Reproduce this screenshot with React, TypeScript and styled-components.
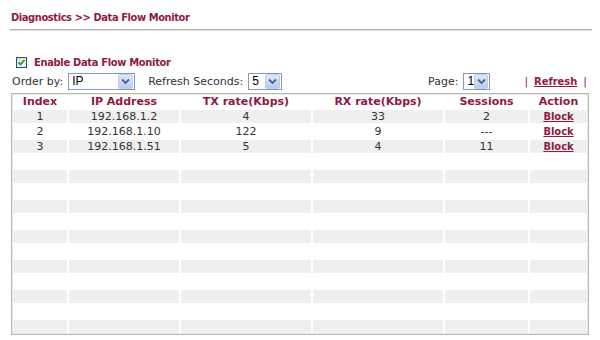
import React from "react";
import styled, { createGlobalStyle } from "styled-components";

const RED = "#8e1a45";
const NARROW = `"DejaVu Sans Condensed", "DejaVu Sans", Tahoma, sans-serif`;

const GlobalStyle = createGlobalStyle`
  html, body {
    margin: 0;
    padding: 0;
    background: #ffffff;
  }
  body {
    font-family: "DejaVu Sans", Verdana, sans-serif;
    font-size: 11px;
    color: #333333;
  }
`;

type Flow = {
  index: number;
  ip: string;
  tx: string;
  rx: string;
  sessions: string;
};

const flows: Flow[] = [
  { index: 1, ip: "192.168.1.2", tx: "4", rx: "33", sessions: "2" },
  { index: 2, ip: "192.168.1.10", tx: "122", rx: "9", sessions: "---" },
  { index: 3, ip: "192.168.1.51", tx: "5", rx: "4", sessions: "11" },
];

const headers = ["Index", "IP Address", "TX rate(Kbps)", "RX rate(Kbps)", "Sessions", "Action"];
const TOTAL_ROWS = 15;

const ArrowIcon = () => (
  <svg width="9" height="7" viewBox="0 0 9 7">
    <polyline points="1,1.5 4.5,5 8,1.5" fill="none" stroke="#4d6185" strokeWidth="1.8" />
  </svg>
);

const FakeSelect = ({ value, width }: { value: string; width: number }) => (
  <SelectBox $width={width}>
    <SelectValue>{value}</SelectValue>
    <SelectButton>
      <ArrowIcon />
    </SelectButton>
  </SelectBox>
);

const App = () => {
  const rows = Array.from({ length: TOTAL_ROWS }, (_, i) => flows[i]);
  return (
    <Page>
      <GlobalStyle />
      <Title>Diagnostics &gt;&gt; Data Flow Monitor</Title>
      <EnableRow>
        <CheckBox>
          <svg width="9" height="9" viewBox="0 0 9 9">
            <polyline points="1.5,4.5 3.5,6.5 7.5,2" fill="none" stroke="#21a121" strokeWidth="1.8" />
          </svg>
        </CheckBox>
        <EnableLabel>Enable Data Flow Monitor</EnableLabel>
      </EnableRow>
      <Controls>
        <Label>Order by:</Label>
        <FakeSelect value="IP" width={67} />
        <Label $gap={13}>Refresh Seconds:</Label>
        <FakeSelect value="5" width={34} />
        <Spacer />
        <Label>Page:</Label>
        <FakeSelect value="1" width={27} />
        <RefreshLinks>
          <Pipe>|</Pipe>
          <LinkText>Refresh</LinkText>
          <Pipe>|</Pipe>
        </RefreshLinks>
      </Controls>
      <TableFrame>
        <Grid>
          {headers.map((h) => (
            <HeadCell key={h}>{h}</HeadCell>
          ))}
          {rows.map((r, i) => {
            const shaded = i % 2 === 0;
            return (
              <React.Fragment key={i}>
                <Cell $shaded={shaded}>{r?.index}</Cell>
                <Cell $shaded={shaded}>{r?.ip}</Cell>
                <Cell $shaded={shaded}>{r?.tx}</Cell>
                <Cell $shaded={shaded}>{r?.rx}</Cell>
                <Cell $shaded={shaded}>{r?.sessions}</Cell>
                <Cell $shaded={shaded}>{r && <LinkText>Block</LinkText>}</Cell>
              </React.Fragment>
            );
          })}
        </Grid>
      </TableFrame>
    </Page>
  );
};
export default App;

const Page = styled.div`
  width: 600px;
  height: 340px;
  box-sizing: border-box;
  padding: 0 8px 0 10px;
  display: flex;
  flex-direction: column;
`;
const Title = styled.div`
  padding-top: 11px;
  padding-bottom: 5px;
  padding-left: 1px;
  line-height: 13px;
  font-family: ${NARROW};
  font-weight: 700;
  letter-spacing: -0.4px;
  color: ${RED};
  border-bottom: 1px solid #b4b4ac;
  box-shadow: 0 1px 0 #e2e2dc;
`;
const EnableRow = styled.div`
  margin-top: 26px;
  height: 13px;
  padding-left: 6px;
  display: flex;
  align-items: center;
  gap: 7px;
`;
const CheckBox = styled.span`
  width: 11px;
  height: 11px;
  box-sizing: border-box;
  border: 1px solid #1c5180;
  background: linear-gradient(135deg, #dcdcd6, #fbfbf9);
  display: flex;
  align-items: center;
  justify-content: center;
`;
const EnableLabel = styled.span`
  font-family: ${NARROW};
  font-weight: 700;
  letter-spacing: -0.3px;
  color: ${RED};
  line-height: 13px;
`;
const Controls = styled.div`
  margin-top: 3px;
  height: 19px;
  padding-left: 2px;
  padding-right: 5px;
  display: flex;
  align-items: center;
`;
const Label = styled.span<{ $gap?: number }>`
  margin-left: ${(p) => p.$gap ?? 0}px;
  margin-right: 5px;
  color: #333333;
`;
const Spacer = styled.div`
  flex: 1;
`;
const SelectBox = styled.div<{ $width: number }>`
  width: ${(p) => p.$width}px;
  height: 17px;
  box-sizing: border-box;
  border: 1px solid #7f9db9;
  background: #ffffff;
  display: flex;
  align-items: center;
`;
const SelectValue = styled.span`
  flex: 1;
  padding-left: 3px;
  color: #000000;
  font-family: "Liberation Sans", Arial, sans-serif;
  font-size: 12px;
  line-height: 15px;
`;
const SelectButton = styled.span`
  width: 13px;
  height: 13px;
  margin-right: 1px;
  border: 1px solid #bacdf6;
  border-radius: 2px;
  background: linear-gradient(#dfe8fd, #b8cbf6);
  display: flex;
  align-items: center;
  justify-content: center;
`;
const RefreshLinks = styled.div`
  margin-left: 34px;
  display: flex;
  align-items: center;
  gap: 6px;
`;
const Pipe = styled.span`
  color: ${RED};
`;
const LinkText = styled.span`
  font-family: ${NARROW};
  color: ${RED};
  font-weight: 700;
  text-decoration: underline;
`;
const TableFrame = styled.div`
  margin-top: 2px;
  margin-left: 1px;
  margin-right: 3px;
  border: 1px solid #b8b8ae;
  box-shadow: inset 0 0 0 1px #ecece6;
  padding: 1px;
  flex: 0 0 auto;
`;
const Grid = styled.div`
  display: grid;
  grid-template-columns: 54px 110px 130px 130px 83px 1fr;
  grid-auto-rows: 13px;
  column-gap: 2px;
  row-gap: 2px;
`;
const HeadCell = styled.div`
  text-align: center;
  font-weight: 700;
  color: ${RED};
  line-height: 14px;
`;
const Cell = styled.div<{ $shaded: boolean }>`
  background: ${(p) => (p.$shaded ? "#efefef" : "#ffffff")};
  text-align: center;
  line-height: 13px;
  color: #333333;
  white-space: nowrap;
`;
